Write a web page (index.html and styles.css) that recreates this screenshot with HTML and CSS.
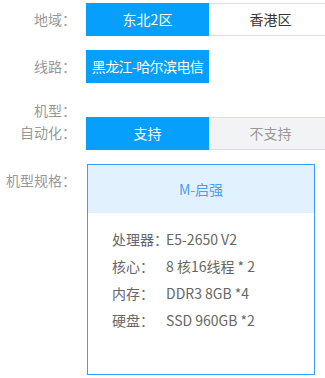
FILE: index.html
```html
<!DOCTYPE html>
<html lang="zh-CN">
<head>
  <meta charset="UTF-8">
  <meta name="viewport" content="width=device-width, initial-scale=1.0">
  <title>机型选择</title>
  <link rel="stylesheet" href="styles.css">
</head>
<body>

<div id="config">
  <!-- 地域 -->
  <div class="row row-region">
    <div class="label">地域：</div>
    <div class="options">
      <span class="opt active">东北2区</span>
      <span class="opt">香港区</span>
    </div>
  </div>

  <!-- 线路 -->
  <div class="row row-line">
    <div class="label">线路：</div>
    <div class="options">
      <span class="opt active opt-tight">黑龙江-哈尔滨电信</span>
    </div>
  </div>

  <!-- 机型自动化 -->
  <div class="row row-auto">
    <div class="label label-multi">机型：<br>自动化：</div>
    <div class="options">
      <span class="opt active">支持</span>
      <span class="opt disabled">不支持</span>
    </div>
  </div>

  <!-- 机型规格 -->
  <div class="row row-spec">
    <div class="label label-spec">机型规格：</div>
    <div class="spec-card">
      <div class="spec-title">M-启强</div>
      <ul class="spec-list">
        <li><span class="spec-key">处理器：</span>E5-2650 V2</li>
        <li><span class="spec-key">核心：</span>8 核16线程 * 2</li>
        <li><span class="spec-key">内存：</span>DDR3 8GB *4</li>
        <li><span class="spec-key">硬盘：</span>SSD 960GB *2</li>
      </ul>
    </div>
  </div>
</div>

</body>
</html>
```

FILE: styles.css
```css
/* 页面基础 */
body {
  margin: 0;
  font-family: "Noto Sans CJK SC", "Noto Sans", sans-serif;
  font-size: 14px;
  color: #333;
  background: #fff;
  overflow: hidden;
}

#config {
  padding-top: 3px;
}

.row {
  display: flex;
  align-items: flex-start;
}

.label {
  width: 76px;
  flex-shrink: 0;
  margin-right: 10px;
  text-align: right;
  color: #999;
  line-height: 33px;
  white-space: nowrap;
}

.options {
  display: flex;
  flex-shrink: 0;
}

.opt {
  width: 123px;
  height: 33px;
  line-height: 31px;
  box-sizing: border-box;
  text-align: center;
  border-top: 1px solid #ddd;
  border-bottom: 1px solid #ddd;
  background: #fff;
  color: #333;
  white-space: nowrap;
}

.opt.active {
  background: #069ffc;
  border-color: #069ffc;
  color: #fff;
}

.opt.disabled {
  background: #f2f3f5;
  color: #999;
}

.opt-tight {
  letter-spacing: -0.6px;
}

.row-line {
  margin-top: 14px;
}

.row-auto {
  margin-top: 16px;
}

.label-multi {
  line-height: 22px;
}

.row-auto .options {
  margin-top: 18px;
}

.row-spec {
  margin-top: 14px;
}

.label-spec {
  line-height: 22px;
  margin-top: 5px;
}

/* 规格卡片 */
.spec-card {
  width: 228px;
  height: 211px;
  box-sizing: border-box;
  margin-left: 1px;
  border: 1px solid #3d9bfd;
  flex-shrink: 0;
}

.spec-title {
  height: 48px;
  line-height: 48px;
  text-align: center;
  background: #e1f2fe;
  color: #4a9ef7;
}

.spec-list {
  list-style: none;
  margin: 0;
  padding: 13px 0 0 24px;
  color: #666;
}

.spec-list li {
  line-height: 27px;
  white-space: nowrap;
}

.spec-key {
  display: inline-block;
  width: 54px;
}
```
